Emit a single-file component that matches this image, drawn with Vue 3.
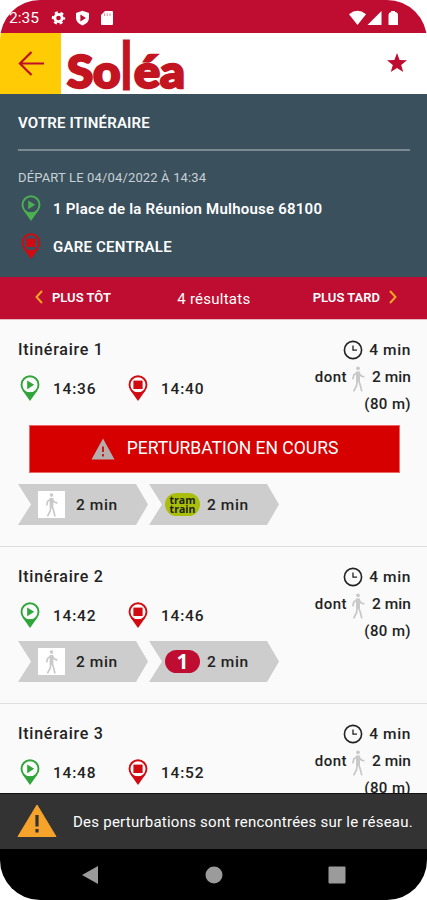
<template>
  <div class="phone">
    <svg class="sprite" aria-hidden="true">
      <symbol id="pin-start" viewBox="0 0 20 26">
        <path d="M2.2 15 L10 26 L17.8 15 Q10 20 2.2 15Z" fill="currentColor" />
        <circle cx="10" cy="9.8" r="8.5" fill="none" stroke="currentColor" stroke-width="1.9" />
        <path d="M7.2 5.4 L14.2 9.8 L7.2 14.2Z" fill="currentColor" />
      </symbol>
      <symbol id="pin-end" viewBox="0 0 20 26">
        <path d="M2.2 15 L10 26 L17.8 15 Q10 20 2.2 15Z" fill="currentColor" />
        <circle cx="10" cy="9.8" r="8.5" fill="none" stroke="currentColor" stroke-width="1.9" />
        <rect x="5.4" y="5.6" width="9.2" height="8.4" fill="currentColor" />
      </symbol>
      <symbol id="walker" viewBox="0 0 14 26">
        <circle cx="7" cy="2.3" r="1.9" fill="currentColor" />
        <path d="M6.4 6.4 L2.8 9 L1.8 13.4 M7.6 6.4 L10 9.8 L13.4 11 M6.2 14.5 L5.6 19.5 L2.6 25.4 M7.6 14.5 L9.4 19.5 L10.8 25.4" fill="none" stroke="currentColor" stroke-width="1.8" stroke-linejoin="round" />
        <path d="M5 5.4 H9 V15.6 H5Z" fill="currentColor" />
      </symbol>
      <symbol id="clock" viewBox="0 0 20 20">
        <circle cx="10" cy="10" r="8.6" fill="none" stroke="currentColor" stroke-width="1.6" />
        <path d="M10 5.5 V10.2 H14" fill="none" stroke="currentColor" stroke-width="1.3" />
      </symbol>
    </svg>

    <div class="status-bar">
      <span class="status-time">2:35</span>
      <svg class="status-left" viewBox="0 0 64 16">
        <circle cx="7.5" cy="8" r="3.7" fill="none" stroke="#fff" stroke-width="2.8" />
        <circle cx="7.5" cy="8" r="5.6" fill="none" stroke="#fff" stroke-width="2.2" stroke-dasharray="3 2.864" stroke-dashoffset="1.5" />
        <path d="M31.5 .8 L38 3 V7.6 C38 11.4 35.4 14.2 31.5 15.4 C27.6 14.2 25 11.4 25 7.6 V3Z" fill="#fff" />
        <path d="M29.4 4.6 L35 8 L29.4 11.4Z" fill="#be0d30" />
        <path d="M54 1 H61 Q62 1 62 2 V14 Q62 15 61 15 H51 Q50 15 50 14 V5Z" fill="#fff" />
        <path d="M53.6 3.4 V6 M56.3 3.4 V6 M59 3.4 V6" stroke="#e58a9c" stroke-width="1" />
      </svg>
      <svg class="status-right" viewBox="0 0 50 16">
        <path d="M0 4.2 Q8.5 -2.6 17 4.2 L8.5 15Z" fill="#fff" />
        <path d="M32.5 1 V15 H18.5Z" fill="#fff" />
        <path d="M42 1 H46 V2 Q49 2.4 49 5 V15 H39.5 V5 Q39.5 2.4 42 2Z" fill="#fff" />
      </svg>
    </div>

    <header class="app-header">
      <button class="back-btn" aria-label="Retour">
        <svg viewBox="0 0 28 28">
          <path d="M27 14 H2 M14 2 L2 14 L14 26" fill="none" stroke="#be1026" stroke-width="2.3" />
        </svg>
      </button>
      <svg class="logo" viewBox="0 0 122 60">
        <g fill="#c3151f" stroke="#c3151f" stroke-width="2.4">
          <text x="2" y="54.5" textLength="53.5" lengthAdjust="spacingAndGlyphs">So</text>
          <text transform="translate(55.4 56.5) scale(1 1.46)" x="0" y="0" stroke-width=".6">l</text>
          <text x="69" y="54.5" textLength="51" lengthAdjust="spacingAndGlyphs">éa</text>
        </g>
      </svg>
      <svg class="star" viewBox="0 0 20 20">
        <path d="M10 0 L12.6 6.9 L20 7.3 L14.2 11.9 L16.2 19 L10 15 L3.8 19 L5.8 11.9 L0 7.3 L7.4 6.9Z" fill="#be0d30" />
      </svg>
    </header>

    <section class="trip">
      <h1 class="trip-title">VOTRE ITINÉRAIRE</h1>
      <p class="trip-date">DÉPART LE 04/04/2022 À 14:34</p>
      <div class="trip-stop">
        <svg class="pin green"><use href="#pin-start" /></svg>
        <span>1 Place de la Réunion Mulhouse 68100</span>
      </div>
      <div class="trip-stop">
        <svg class="pin red"><use href="#pin-end" /></svg>
        <span>GARE CENTRALE</span>
      </div>
    </section>

    <nav class="results-bar">
      <button class="earlier">
        <svg viewBox="0 0 8 14"><path d="M7 1 L1.5 7 L7 13" /></svg>
        <span>PLUS TÔT</span>
      </button>
      <span class="count">4 résultats</span>
      <button class="later">
        <span>PLUS TARD</span>
        <svg viewBox="0 0 8 14"><path d="M1 1 L6.5 7 L1 13" /></svg>
      </button>
    </nav>

    <main class="results">
      <article v-for="route in routes" :key="route.id" class="route">
        <div class="route-head">
          <div class="route-main">
            <h2 class="route-title">Itinéraire {{ route.id }}</h2>
            <div class="times">
              <svg class="pin green"><use href="#pin-start" /></svg>
              <span class="time">{{ route.start }}</span>
              <svg class="pin red"><use href="#pin-end" /></svg>
              <span class="time">{{ route.end }}</span>
            </div>
          </div>
          <div class="route-info">
            <div class="info-line">
              <svg class="clock"><use href="#clock" /></svg>
              <span>4 min</span>
            </div>
            <div class="info-line walking">
              <span class="dont">dont</span>
              <svg class="walker"><use href="#walker" /></svg>
              <span>2 min</span>
            </div>
            <div class="info-line distance"><span>(80 m)</span></div>
          </div>
        </div>

        <button v-if="route.disrupted" class="disruption">
          <svg viewBox="0 0 24 22">
            <path d="M12 .5 L23.5 21.5 H.5Z" fill="#b5aead" />
            <path d="M12 8.5 V14 M12 16 V18.4" stroke="#cf1717" stroke-width="2" />
          </svg>
          <span>PERTURBATION EN COURS</span>
        </button>

        <div class="steps">
          <div class="step">
            <span class="walk-box"><svg><use href="#walker" /></svg></span>
            <span>2 min</span>
          </div>
          <div class="step">
            <span v-if="route.line === 'tram-train'" class="line tram-train"><span>tram</span><span>train</span></span>
            <span v-else class="line">{{ route.line }}</span>
            <span>2 min</span>
          </div>
        </div>
      </article>
    </main>

    <div class="alert">
      <svg viewBox="0 0 40 33">
        <path d="M20 1 L39 32.5 H1Z" fill="#f5a32b" stroke="#f5a32b" stroke-linejoin="round" />
        <path d="M20 11 V22.5 M20 25 V28.4" stroke="#333" stroke-width="3.2" />
      </svg>
      <span>Des perturbations sont rencontrées sur le réseau.</span>
    </div>

    <div class="system-nav">
      <svg viewBox="0 0 18 18"><path d="M17 0 V18 L1 9Z" /></svg>
      <svg viewBox="0 0 18 18"><circle cx="9" cy="9" r="8.5" /></svg>
      <svg viewBox="0 0 18 18"><rect x=".5" y=".5" width="17" height="17" rx="1" /></svg>
    </div>
  </div>
</template>

<script setup>
import { ref } from 'vue';

const routes = ref([
  { id: 1, start: '14:36', end: '14:40', line: 'tram-train', disrupted: true },
  { id: 2, start: '14:42', end: '14:46', line: '1', disrupted: false },
  { id: 3, start: '14:48', end: '14:52', line: '1', disrupted: false },
]);
</script>

<style>
body {
  background: #fff;
}
</style>

<style scoped>
.phone {
  display: flex;
  flex-direction: column;
  width: 427px;
  height: 900px;
  overflow: hidden;
  border-radius: 40px;
  background: #fafafa;
  color: #222;
  font-family: Roboto, "Liberation Sans", sans-serif;
  font-weight: 500;
}

.phone * {
  box-sizing: border-box;
}

.sprite {
  display: none;
}

svg {
  display: block;
  flex: none;
}

h1,
h2,
p {
  margin: 0;
}

button {
  border: none;
  padding: 0;
  background: none;
  font: inherit;
  color: inherit;
  cursor: pointer;
}

.status-bar {
  flex: none;
  display: flex;
  align-items: center;
  height: 33px;
  padding: 2px 28px 0 9px;
  background: #be0d30;
  color: #fff;
}

.status-time {
  width: 42px;
  font-size: 15.5px;
  font-weight: 400;
}

.status-left {
  width: 64px;
  height: 16px;
}

.status-right {
  width: 50px;
  height: 16px;
  margin-left: auto;
}

.app-header {
  flex: none;
  display: flex;
  height: 61px;
  background: #fff;
}

.back-btn {
  display: flex;
  align-items: center;
  width: 61px;
  padding-left: 18px;
  background: #ffcb05;
}

.back-btn svg {
  width: 27px;
  height: 27px;
}

.logo {
  width: 122px;
  height: 60px;
  margin-left: 4px;
  overflow: visible;
  font-family: Lato, sans-serif;
  font-size: 46px;
  font-weight: 900;
}

.star {
  width: 20px;
  height: 20px;
  margin: 20px 20px 0 auto;
}

.trip {
  flex: none;
  height: 183px;
  padding: 0 17px 0 18px;
  background: #3a505d;
  color: #fff;
}

.trip-title {
  height: 57px;
  padding-top: 1px;
  border-bottom: 2px solid #7b8991;
  font-size: 15px;
  font-weight: 600;
  letter-spacing: 0.18px;
  line-height: 57px;
}

.trip-date {
  height: 38px;
  padding-top: 8px;
  color: #c8d0d5;
  font-size: 13px;
  font-weight: 400;
  letter-spacing: 0.15px;
  line-height: 38px;
}

.trip-stop {
  display: flex;
  align-items: center;
  height: 38px;
  font-size: 15px;
  font-weight: 600;
  letter-spacing: 0.22px;
}

.trip-stop span {
  padding-top: 2px;
}

.pin {
  width: 20px;
  height: 26px;
}

.green {
  color: #2fa53a;
}

.red {
  color: #d20a11;
}

.trip-stop .pin {
  margin: 0 12px 0 3px;
}

.trip-stop .green {
  color: #4caf50;
}

.results-bar {
  flex: none;
  display: flex;
  align-items: center;
  height: 43px;
  padding: 0 30px 2px 35px;
  border-bottom: 1px solid #e7b9c2;
  background: #be0d30;
  color: #fff;
  font-size: 13px;
  font-weight: 600;
}

.results-bar button {
  display: flex;
  align-items: center;
  gap: 9px;
}

.results-bar svg {
  width: 8px;
  height: 14px;
  fill: none;
  stroke: #f5a623;
  stroke-width: 2;
}

.count {
  margin: 4px auto 0;
  padding-left: 4px;
  font-size: 15px;
  font-weight: 400;
  letter-spacing: 0.25px;
}

.results {
  flex: 1;
  min-height: 0;
  overflow: hidden;
}

.route {
  padding: 16px 16px 21px 18px;
  border-bottom: 1px solid #dedede;
  font-size: 15.5px;
  letter-spacing: 0.6px;
}

.route-head {
  display: flex;
  justify-content: space-between;
  height: 78px;
}

.route-title {
  height: 28px;
  font-size: 16px;
  font-weight: 500;
  letter-spacing: 0.75px;
  line-height: 28px;
}

.times {
  display: flex;
  align-items: center;
  height: 26px;
  margin: 11px 0 0 2px;
}

.time {
  width: 88px;
  padding: 2px 0 0 13px;
  font-size: 15.5px;
  letter-spacing: 0.8px;
}

.info-line {
  display: flex;
  align-items: center;
  justify-content: flex-end;
  height: 27px;
}

.clock {
  width: 20px;
  height: 20px;
  margin-right: 6px;
}

.walking {
  letter-spacing: 0.05px;
}

.dont {
  font-size: 15px;
  letter-spacing: 0.5px;
}

.walker {
  width: 14px;
  height: 26px;
  margin: 4px 7px 0 4px;
  color: #c9c9c9;
}

.distance {
  font-size: 15px;
  letter-spacing: 0.4px;
}

.disruption {
  display: flex;
  align-items: center;
  justify-content: center;
  width: 371px;
  height: 48px;
  margin: 11px 0 0 11px;
  padding-bottom: 3px;
  border: 1px solid #e66;
  background: #d60000;
  color: #fff;
  font-size: 17.5px;
  font-weight: 400;
  letter-spacing: 0;
}

.disruption svg {
  width: 24px;
  height: 22px;
  margin: 3px 12px 0 0;
}

.steps {
  display: flex;
}

.disruption + .steps {
  margin-top: 11px;
}

.step {
  display: flex;
  align-items: center;
  width: 131px;
  height: 41px;
  padding-left: 16px;
  background: #cdcdcd;
  clip-path: polygon(0 0, 118px 0, 130px 50%, 118px 100%, 0 100%, 13px 50%);
}

.walk-box {
  display: flex;
  align-items: center;
  justify-content: center;
  width: 27px;
  height: 27px;
  margin: 0 11px 0 4px;
  background: #fff;
  color: #c9c9c9;
}

.walk-box svg {
  width: 13px;
  height: 24px;
}

.line {
  display: flex;
  align-items: center;
  justify-content: center;
  width: 35px;
  height: 23px;
  margin-right: 7px;
  border-radius: 12px;
  background: #be0d30;
  color: #fff;
  font-family: "Open Sans", sans-serif;
  font-size: 21px;
  font-weight: 700;
  letter-spacing: 0;
  line-height: 23px;
}

.tram-train {
  flex-direction: column;
  background: #a9be0d;
  color: #1d220c;
  font-size: 10.5px;
  line-height: 9px;
}

.alert {
  flex: none;
  display: flex;
  align-items: center;
  height: 56px;
  padding-left: 17px;
  border-top: 1px solid #111;
  background: #333;
  color: #fff;
  font-size: 15px;
  font-weight: 400;
  letter-spacing: 0.24px;
  white-space: nowrap;
}

.alert svg {
  width: 40px;
  height: 33px;
  margin: 0 16px 2px 0;
}

.system-nav {
  flex: none;
  display: flex;
  align-items: center;
  justify-content: space-between;
  height: 51px;
  padding: 0 81px;
  background: #000;
}

.system-nav svg {
  width: 18px;
  height: 18px;
  fill: #9b9b9b;
}
</style>
